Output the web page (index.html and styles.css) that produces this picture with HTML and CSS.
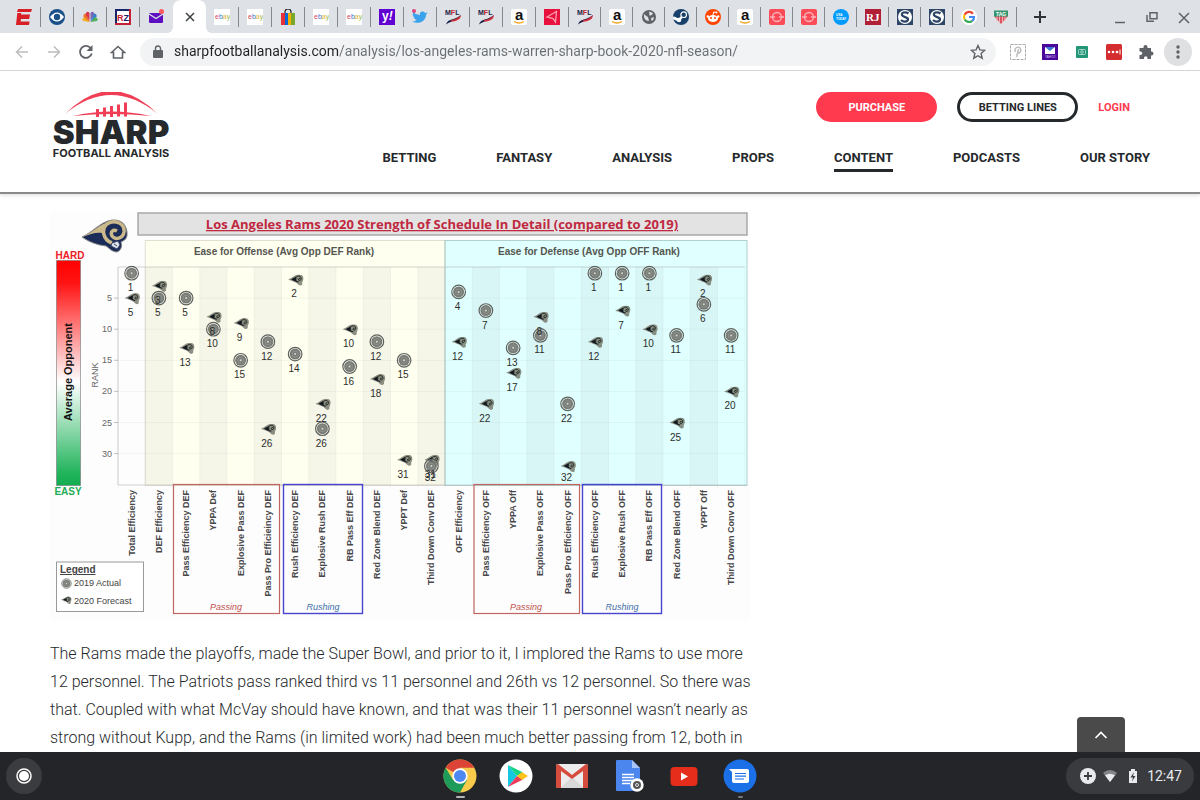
FILE: index.html
```html
<!DOCTYPE html>
<html lang="en">
<head>
  <meta charset="UTF-8" />
  <meta name="viewport" content="width=device-width, initial-scale=1.0"/>
  <title>Los Angeles Rams - Sharp Football Analysis</title>
  <link rel="stylesheet" href="styles.css">
</head>
<body>
  <!-- Shared icons -->
  <svg class="defs" width="0" height="0" aria-hidden="true">
    <symbol id="ebay" viewBox="0 0 16 16">
      <rect width="16" height="16" fill="#fff"/>
      <text x="1" y="10" font-size="7" class="fav-text"><tspan fill="#d9485a">e</tspan><tspan fill="#3b73c8">b</tspan><tspan fill="#e3b53a">a</tspan><tspan fill="#93b83e">y</tspan></text>
    </symbol>
    <symbol id="mfl" viewBox="0 0 16 16">
      <text x="0" y="6" font-size="7" font-weight="bold" class="fav-text"><tspan fill="#1c2145">M</tspan><tspan fill="#c3202f">F</tspan><tspan fill="#1c2145">L</tspan></text>
      <path d="M1 15.500C3 9 9 12 16 6C14 12 7 11 1 15.500z" fill="#1c2145"/>
      <path d="M6 11C9 11 13 9 16 6L15 9.500C12 12 9 12.500 6 12.500z" fill="#d3303c"/>
    </symbol>
    <symbol id="amazon" viewBox="0 0 16 16">
      <rect width="16" height="16" rx="2" fill="#fff"/>
      <text x="4" y="11" font-size="15" font-weight="bold" class="fav-text" fill="#111">a</text>
      <path d="M3 12.500Q8 15.500 13 12.500" fill="none" stroke="#f5a623" stroke-width="1.300"/>
    </symbol>
    <symbol id="redring" viewBox="0 0 16 16">
      <rect width="16" height="16" rx="2" fill="#fb4b57"/>
      <circle cx="8" cy="8" r="4.500" fill="none" stroke="#ffb3b8" stroke-width="1.300"/>
      <path d="M1 8h5M10 8h5" stroke="#ffb3b8" stroke-width="1.500"/>
      <rect x="6" y="6.500" width="4" height="3" fill="#fb4b57"/>
    </symbol>
    <symbol id="sharp-s" viewBox="0 0 16 16">
      <rect width="16" height="16" fill="#2d4566"/>
      <circle cx="8" cy="8" r="7" fill="#fff"/>
      <path d="M11.500 4.500C8 2 4 4 5 6.200S11.500 8 11 10.500S6.500 13.500 4 11" fill="none" stroke="#2d4566" stroke-width="2.200"/>
    </symbol>
    <symbol id="mail" viewBox="0 0 16 16">
      <rect x="1" y="4" width="14" height="10" rx="1" fill="#5e10c0"/>
      <path d="M1 5L8 9.500L15 5" fill="none" stroke="#dee1e6" stroke-width="1.300"/>
      <circle cx="13.500" cy="2.500" r="2.500" fill="#ff5a5f"/>
    </symbol>
    <symbol id="ram" viewBox="0 0 48 34">
      <path d="M1 18C12 13 19 3 31 1C42 0 47 8 46 17C45 21 42 22 40 23C42 28 39 32 36 33C31 33 28 29 25 27C16 26 8 23 1 18z" fill="#1b2c58" stroke="#8e8d8a" stroke-width="1"/>
      <path d="M1 18C11 14 18 5 30 2C24 6 22 11 23 15C18 12 10 15 1 18z" fill="#cbb98c"/>
      <path d="M31 24C22 21 20 10 26 5C33 0 44 4 43 13C42 20 34 21 31 17C29 13 32 10 36 12" fill="none" stroke="#cbb98c" stroke-width="3.500"/>
      <path d="M31 24l6-2 2 4-3 4-6-3z" fill="#dfe2ea" stroke="#33436a"/>
      <path d="M33 25l3 2" stroke="#33436a"/>
    </symbol>
    <symbol id="ram-dark" viewBox="0 0 16 12">
      <path d="M0 5C5 3 7 0 11 0C16 0 16 5 14 8C15 11 12 12 10 10C9 8 5 7 0 5z" fill="#6f7365" fill-opacity="0.800"/>
      <path d="M3 5C6 3 7 3 8 2C7 6 9 7 11 7L10 8C7 7 5 6 3 5z" fill="#121820"/>
      <path d="M8 5C7 2 10 1 12 2C14 4 13 6 11 6C10 5 10 4 12 4" fill="none" stroke="#1d251f" stroke-width="1"/>
    </symbol>
    <symbol id="coin" viewBox="0 0 16 16">
      <circle cx="8" cy="8" r="6.800" fill="#fff" fill-opacity="0.300" stroke="#5d625c" stroke-width="1.200"/>
      <circle cx="8" cy="8" r="5.500" fill="#6b6f69" fill-opacity="0.900"/>
      <circle cx="8" cy="8" r="3" fill="none" stroke="#a3a79f" stroke-width="0.500"/>
      <circle cx="8" cy="8" r="1" fill="#d5d7d0"/>
    </symbol>
  </svg>

  <div class="tabs">
    <div class="tab"><svg class="fav" viewBox="0 0 16 16"><path d="M2 0h14l-1 3H1zM1.300 4h4l-.300 1.500h9l-.800 4.500H5l-.400 2.500h9L13 16H0z" fill="#d81f26"/></svg></div>
    <div class="tab"><svg class="fav" viewBox="0 0 16 16"><circle cx="8" cy="8" r="8" fill="#1a5088"/><path d="M1 8Q8-1 15 8Q8 17 1 8z" fill="#fff"/><circle cx="8" cy="8" r="3.200" fill="#1a5088"/></svg></div>
    <div class="tab"><svg class="fav" viewBox="0 0 16 16"><path d="M7.500 13L1 12Q-1 9 3 8z" fill="#f3b128"/><path d="M7.500 13L1.500 8Q1 4 4.500 5z" fill="#ee7426"/><path d="M7.500 12L3.500 5Q5 1 7.500 4z" fill="#d8364a"/><path d="M8.500 12V4Q11 1 12.500 5z" fill="#7566b5"/><path d="M8.500 13L12 5Q15 4 14.500 8z" fill="#3380c8"/><path d="M8.500 13L13 8Q17 9 15 12z" fill="#51b058"/></svg></div>
    <div class="tab"><svg class="fav" viewBox="0 0 16 16"><rect x="1" y="1" width="14" height="14" fill="#fff" stroke="#18246a" stroke-width="2"/><path d="M0 15h16M15 0v16" stroke="#c42034" stroke-width="2"/><text x="2" y="12" font-size="9" font-weight="bold" class="fav-text"><tspan fill="#c42034">R</tspan><tspan fill="#18246a">Z</tspan></text></svg></div>
    <div class="tab"><svg class="fav"><use href="#mail"/></svg></div>
    <div class="tab active"><button class="close" aria-label="Close tab"><svg viewBox="0 0 16 16"><path d="M4 4l8 8M12 4l-8 8" stroke="#3c4043" stroke-width="1.500"/></svg></button></div>
    <div class="tab"><svg class="fav"><use href="#ebay"/></svg></div>
    <div class="tab"><svg class="fav"><use href="#ebay"/></svg></div>
    <div class="tab"><svg class="fav" viewBox="0 0 16 16"><path d="M5 5V3Q5 0 8 0T11 3V5" fill="none" stroke="#222" stroke-width="1.200"/><path d="M1 4h4v12H1z" fill="#e53238"/><path d="M5 4h3v12H5z" fill="#0968d8"/><path d="M8 4h3v12H8z" fill="#f5af02"/><path d="M11 4h4v12h-4z" fill="#79a82d"/></svg></div>
    <div class="tab"><svg class="fav"><use href="#ebay"/></svg></div>
    <div class="tab"><svg class="fav"><use href="#ebay"/></svg></div>
    <div class="tab"><svg class="fav" viewBox="0 0 16 16"><rect width="16" height="16" fill="#6001d2"/><text x="3" y="11" font-size="12" font-weight="bold" class="fav-text" fill="#fff">y<tspan font-style="italic">!</tspan></text></svg></div>
    <div class="tab"><svg class="fav" viewBox="0 0 16 16"><path d="M1 3Q4 6 8 6C7 3 11 1 13 4L15.500 3.500L14 6C14 12 7 16 0 12.500Q3 12.500 4.500 11Q2 10 2 8.500Q0 6 1 3z" fill="#3aa3ec"/><circle cx="2" cy="2" r="2" fill="#e0457b"/></svg></div>
    <div class="tab"><svg class="fav"><use href="#mfl"/></svg></div>
    <div class="tab"><svg class="fav"><use href="#mfl"/></svg></div>
    <div class="tab"><svg class="fav"><use href="#amazon"/></svg></div>
    <div class="tab"><svg class="fav" viewBox="0 0 16 16"><rect width="16" height="16" fill="#e8113d"/><path d="M3 8L12.500 2.500L11.500 13L9 9.500Z" fill="none" stroke="#ff9cad" stroke-width="1.300"/></svg></div>
    <div class="tab slim"><svg class="fav"><use href="#mfl"/></svg></div>
    <div class="tab slim"><svg class="fav"><use href="#amazon"/></svg></div>
    <div class="tab slim"><svg class="fav" viewBox="0 0 16 16"><circle cx="8" cy="8" r="7" fill="#5f6368"/><path d="M3 5Q5 7 7 8L8 12Q4 12 3 8zM8 2.500L12 4Q11 7 8.500 6.500zM10 9l3-1Q13 11 10.500 12z" fill="#dee1e6"/></svg></div>
    <div class="tab slim"><svg class="fav" viewBox="0 0 16 16"><circle cx="8" cy="8" r="8" fill="#17416b"/><path d="M0 8.500L5.500 11" stroke="#fff" stroke-width="3"/><circle cx="6" cy="11" r="2.300" fill="#fff"/><path d="M6 11L10.500 6" stroke="#fff" stroke-width="2.500"/><circle cx="10.700" cy="5.700" r="2.800" fill="#17416b" stroke="#fff" stroke-width="1.200"/></svg></div>
    <div class="tab slim"><svg class="fav" viewBox="0 0 16 16"><circle cx="8" cy="8" r="8" fill="#ff4500"/><ellipse cx="8" cy="9.500" rx="5" ry="3.500" fill="#fff"/><circle cx="2.800" cy="7.500" r="1.200" fill="#fff"/><circle cx="13.200" cy="7.500" r="1.200" fill="#fff"/><path d="M8 6l.700-3 2.500.500" fill="none" stroke="#fff"/><circle cx="11.500" cy="3.500" r="1" fill="#fff"/><circle cx="6" cy="9" r="1" fill="#ff4500"/><circle cx="10" cy="9" r="1" fill="#ff4500"/></svg></div>
    <div class="tab slim"><svg class="fav"><use href="#amazon"/></svg></div>
    <div class="tab slim"><svg class="fav"><use href="#redring"/></svg></div>
    <div class="tab slim"><svg class="fav"><use href="#redring"/></svg></div>
    <div class="tab slim"><svg class="fav" viewBox="0 0 16 16"><circle cx="8" cy="8" r="8" fill="#009bff"/><g font-size="3" font-weight="bold" class="fav-text" fill="#fff"><text x="3" y="7">USA</text><text x="3" y="11">TODAY</text></g></svg></div>
    <div class="tab slim"><svg class="fav" viewBox="0 0 16 16"><rect width="16" height="16" fill="#b01f36"/><text x="1" y="12" font-size="11" font-weight="bold" class="fav-serif" fill="#fff">RJ</text></svg></div>
    <div class="tab slim"><svg class="fav"><use href="#sharp-s"/></svg></div>
    <div class="tab slim"><svg class="fav"><use href="#sharp-s"/></svg></div>
    <div class="tab slim"><svg class="fav" viewBox="0 0 16 16"><circle cx="8" cy="8" r="8" fill="#fff"/><g fill="none" stroke-width="2.200"><path d="M12 4.700A5 5 0 0 0 3.600 5.700" stroke="#ea4335"/><path d="M3.600 5.700A5 5 0 0 0 3.700 10.500" stroke="#fbbc05"/><path d="M3.700 10.500A5 5 0 0 0 11.300 11.800" stroke="#34a853"/><path d="M11.300 11.800A5 5 0 0 0 13 8H8" stroke="#4285f4"/></g></svg></div>
    <div class="tab slim"><svg class="fav" viewBox="0 0 16 16"><path d="M1 2h14v5L8 15L1 7z" fill="#d8545e"/><path d="M4 7v5M6.500 7v7M9.500 7v7M12 7v5" stroke="#f1b4b6"/><rect x="1" y="1.500" width="14" height="6" fill="#33946d"/><text x="3" y="6.500" font-size="5" font-weight="bold" class="fav-text" fill="#fff">TAG</text></svg></div>
    <button class="new-tab" aria-label="New tab"><svg viewBox="0 0 16 16"><path d="M8 2v12M2 8h12" stroke="#303336" stroke-width="2"/></svg></button>
    <div class="window-buttons">
      <button aria-label="Minimize"><svg viewBox="0 0 16 16"><path d="M3 13.500h10" stroke="#5f6368" stroke-width="1.500"/></svg></button>
      <button aria-label="Restore"><svg viewBox="0 0 16 16"><path d="M6 3.700h7v6H6zM3 6v6.300h7" fill="none" stroke="#5f6368" stroke-width="1.500"/></svg></button>
      <button aria-label="Close window"><svg viewBox="0 0 16 16"><path d="M3 4l10 10M13 4L3 14" stroke="#5f6368" stroke-width="1.500"/></svg></button>
    </div>
  </div>

  <div class="toolbar">
    <button aria-label="Back"><svg viewBox="0 0 16 16"><path d="M14 8H3M8 2.500L2.500 8L8 13.500" fill="none" stroke="#babcbe" stroke-width="1.500"/></svg></button>
    <button aria-label="Forward"><svg viewBox="0 0 16 16"><path d="M2 8h11M8 2.500L13.500 8L8 13.500" fill="none" stroke="#babcbe" stroke-width="1.500"/></svg></button>
    <button aria-label="Reload"><svg viewBox="0 0 16 16"><path d="M13 4.500A6 6 0 1 0 13.800 9.500" fill="none" stroke="#5f6368" stroke-width="1.800"/><path d="M14.500 1v6h-6z" fill="#5f6368"/></svg></button>
    <button aria-label="Home"><svg viewBox="0 0 16 16"><path d="M1.500 8.500L8 2.500L14.500 8.500H12.500V14H3.500V8.500z" fill="none" stroke="#5f6368" stroke-width="1.600"/></svg></button>
    <div class="address">
      <svg viewBox="0 0 16 16"><path d="M4 6h8a1 1 0 0 1 1 1v6a1 1 0 0 1-1 1H4a1 1 0 0 1-1-1V7a1 1 0 0 1 1-1z" fill="#5f6368"/><path d="M5.500 6V4.500a2.500 2.500 0 0 1 5 0V6" fill="none" stroke="#5f6368" stroke-width="1.400"/></svg>
      <input type="text" class="url" aria-label="Address" value="sharpfootballanalysis.com/analysis/los-angeles-rams-warren-sharp-book-2020-nfl-season/">
      <button aria-label="Bookmark"><svg viewBox="0 0 16 16"><path d="M8 1.500l1.900 4.400 4.800.400-3.600 3.200 1.100 4.700L8 11.700l-4.200 2.500 1.100-4.700L1.300 6.300l4.800-.400z" fill="none" stroke="#5f6368" stroke-width="1.400"/></svg></button>
    </div>
    <button aria-label="Pinterest"><svg viewBox="0 0 16 16"><rect x="0.500" y="0.500" width="15" height="15" fill="none" stroke="#aaa" stroke-dasharray="3 1"/><path d="M6.500 13L8.500 5M5.500 8C3.500 4 8 2 10 4S10 10 7.500 9" fill="none" stroke="#bbb" stroke-width="1.400"/></svg></button>
    <button aria-label="Yahoo Mail"><svg viewBox="0 0 16 16"><rect width="16" height="16" fill="#4b079c"/><rect x="3" y="3" width="10" height="7" fill="#fff"/><path d="M3 3h10L8 7z" fill="#3a77d4"/><text x="3" y="14" font-size="3" fill="#d8c8f0" class="fav-text">YAHOO</text></svg></button>
    <button aria-label="Camera"><svg viewBox="0 0 16 16"><rect x="2" y="2" width="12" height="12" rx="1" fill="#239678"/><rect x="4.500" y="5.500" width="7" height="5" rx="1" fill="none" stroke="#c2e5db" stroke-width="0.800"/><circle cx="8" cy="8" r="1.300" fill="none" stroke="#c2e5db" stroke-width="0.800"/></svg></button>
    <button aria-label="LastPass"><svg viewBox="0 0 16 16"><rect width="16" height="16" rx="1.500" fill="#d32d2f"/><circle cx="3" cy="8" r="1.300" fill="#fff"/><circle cx="7" cy="8" r="1.300" fill="#fff"/><circle cx="11" cy="8" r="1.300" fill="#fff"/><path d="M14 5.500v5" stroke="#fff"/></svg></button>
    <button aria-label="Extensions"><svg viewBox="0 0 16 16"><path d="M2 4h3.500V3a2 2 0 0 1 4 0v1H13v3.500h.500a2 2 0 0 1 0 4H13V15H9.500v-1a1.700 1.700 0 0 0-3.500 0v1H1.500v-4h1a1.700 1.700 0 0 0 0-3.500h-1V4z" fill="#5f6368"/></svg></button>
    <button class="menu" aria-label="Menu"><svg viewBox="0 0 16 16"><circle cx="8" cy="3" r="1.700" fill="#5f6368"/><circle cx="8" cy="8" r="1.700" fill="#5f6368"/><circle cx="8" cy="13" r="1.700" fill="#5f6368"/></svg></button>
  </div>

  <div class="page">
    <header class="site-header">
      <a href="#" class="logo" aria-label="Sharp Football Analysis">
        <svg viewBox="0 0 122 67">
          <path d="M15 22Q61-24 108 22Q61-16 15 22z" fill="#ef3e55"/>
          <path d="M23 24Q61 15 101 24Q61 20 23 24z" fill="#ef3e55"/>
          <path d="M47.500 17v8M54.500 15.500v9M61.500 14v11M68.500 12.500v12M75.500 10.500v14" stroke="#ef3e55" stroke-width="3"/>
          <text x="61" y="52" text-anchor="middle" class="logo-big">SHARP</text>
          <text x="61" y="65" text-anchor="middle" class="logo-small">FOOTBALL ANALYSIS</text>
        </svg>
      </a>
      <div class="header-right">
        <div class="account">
          <button class="pill red">PURCHASE</button>
          <button class="pill">BETTING LINES</button>
          <a href="#" class="login">LOGIN</a>
        </div>
        <nav class="main-nav">
          <a href="#">BETTING</a>
          <a href="#">FANTASY</a>
          <a href="#">ANALYSIS</a>
          <a href="#">PROPS</a>
          <a href="#" class="current">CONTENT</a>
          <a href="#">PODCASTS</a>
          <a href="#">OUR STORY</a>
        </nav>
      </div>
    </header>

    <main class="content">
      <article>
        <svg class="chart" viewBox="0 0 700 415" role="img" aria-label="Los Angeles Rams 2020 strength of schedule">
          <defs>
            <linearGradient id="scale" x1="0" y1="0" x2="0" y2="1">
              <stop offset="0" stop-color="#ff0000"/>
              <stop offset="0.100" stop-color="#ff1414"/>
              <stop offset="0.540" stop-color="#ffffff"/>
              <stop offset="0.950" stop-color="#1fb35a"/>
              <stop offset="1" stop-color="#12ad50"/>
            </linearGradient>
          </defs>
          <rect y="7" width="700" height="408" fill="#fdfdfd"/>
          <rect x="88" y="8" width="609" height="22" fill="#e3e3e3" stroke="#a9a9a9" stroke-width="1.500"/>
          <text x="392" y="24" text-anchor="middle" class="chart-title">Los Angeles Rams 2020 Strength of Schedule In Detail (compared to 2019)</text>
          <use href="#ram" x="31" y="14" width="48" height="34"/>
          <text x="20" y="54" text-anchor="middle" class="hard">HARD</text>
          <rect x="6.500" y="55.500" width="24" height="225" fill="url(#scale)" stroke="#777" stroke-opacity="0.600"/>
          <text transform="translate(22 167) rotate(-90)" text-anchor="middle" class="opponent">Average Opponent</text>
          <text x="18" y="290" text-anchor="middle" class="easy">EASY</text>
          <text transform="translate(48 170) rotate(-90)" text-anchor="middle" class="axis">RANK</text>
          <g id="plot"></g>
          <text x="234" y="50" text-anchor="middle" class="group-title">Ease for Offense (Avg Opp DEF Rank)</text>
          <text x="539" y="50" text-anchor="middle" class="group-title">Ease for Defense (Avg Opp OFF Rank)</text>
          <g fill="none" stroke="#c0655f" stroke-width="1.200">
            <rect x="123.500" y="279.500" width="106" height="129"/>
            <rect x="424" y="279.500" width="105.500" height="129"/>
          </g>
          <g fill="none" stroke="#4744cf" stroke-width="1.400">
            <rect x="233.500" y="279.500" width="79" height="129"/>
            <rect x="532.500" y="279.500" width="79" height="129"/>
          </g>
          <text x="176" y="405" text-anchor="middle" class="passing">Passing</text>
          <text x="273" y="405" text-anchor="middle" class="rushing">Rushing</text>
          <text x="476" y="405" text-anchor="middle" class="passing">Passing</text>
          <text x="572" y="405" text-anchor="middle" class="rushing">Rushing</text>
          <rect x="6.500" y="357" width="87" height="49.500" fill="#fff" stroke="#999"/>
          <text x="10" y="368" class="legend-title">Legend</text>
          <use href="#coin" x="11" y="373" width="11" height="11"/>
          <text x="24" y="381" class="legend">2019 Actual</text>
          <use href="#ram-dark" x="11" y="391" width="11" height="9"/>
          <text x="24" y="399" class="legend">2020 Forecast</text>
        </svg>
        <p>The Rams made the playoffs, made the Super Bowl, and prior to it, I implored the Rams to use more 12 personnel. The Patriots pass ranked third vs 11 personnel and 26th vs 12 personnel. So there was that. Coupled with what McVay should have known, and that was their 11 personnel wasn’t nearly as strong without Kupp, and the Rams (in limited work) had been much better passing from 12, both in</p>
      </article>
    </main>
    <button class="to-top" aria-label="Back to top"><svg viewBox="0 0 16 16"><path d="M2.500 11L8 5.500L13.500 11" fill="none" stroke="#fff" stroke-width="1.700"/></svg></button>
  </div>

  <footer class="shelf">
    <button class="launcher" aria-label="Launcher"><svg viewBox="0 0 16 16"><circle cx="8" cy="8" r="7" fill="none" stroke="#fff" stroke-width="1.500"/><circle cx="8" cy="8" r="5" fill="#fff"/></svg></button>
    <div class="apps">
      <button class="open" aria-label="Chrome"><svg viewBox="0 0 34 34"><circle cx="17" cy="17" r="16.500" fill="#f9cb4b"/><path d="M17 17L2.700 8.700A16.500 16.500 0 0 1 31.300 8.700H17z" fill="#db4437"/><path d="M2.700 8.700A16.500 16.500 0 0 0 17 33.500L24 21L10 21z" fill="#1e9b5a"/><circle cx="17" cy="17" r="7.700" fill="#fff"/><circle cx="17" cy="17" r="6" fill="#4d87f1"/></svg></button>
      <button aria-label="Play Store"><svg viewBox="0 0 34 34"><circle cx="17" cy="17" r="16.500" fill="#fff"/><path d="M9 6L18 17L9 28z" fill="#14c8e0"/><path d="M9 6L24 13.500L18 17z" fill="#12d483"/><path d="M9 28L24 20.500L18 17z" fill="#ed3a5a"/><path d="M23 13L29 17L23 21L18 17z" fill="#fcc21c"/></svg></button>
      <button aria-label="Gmail"><svg viewBox="0 0 34 34"><rect x="1" y="5" width="32" height="24" rx="2" fill="#ececec"/><path d="M5 29L17 18L29 29z" fill="#d9d9d9"/><path d="M1 7Q1 5 3 5L17 16L31 5Q33 5 33 7V29H28V12L17 20L6 12V29H3Q1 29 1 27z" fill="#d54b3d"/></svg></button>
      <button aria-label="Docs"><svg viewBox="0 0 34 34"><path d="M6 1H21L29 9V32H6Q5 32 5 31V2Q5 1 6 1z" fill="#4a86ee"/><path d="M21 1L29 9H21z" fill="#a9c5f8"/><path d="M11 15.500h12M11 18.500h12M11 21.500h12M11 24.500h8" stroke="#fff" stroke-width="1.300"/><circle cx="26" cy="26" r="6.700" fill="#fff"/><circle cx="26" cy="26" r="4" fill="#555"/><circle cx="26" cy="26" r="1.500" fill="#555" stroke="#ddd"/></svg></button>
      <button aria-label="YouTube"><svg viewBox="0 0 34 34"><rect x="3.500" y="8" width="27" height="19" rx="4" fill="#e62d1c"/><path d="M14 13.500L21 17.500L14 21.500z" fill="#fff"/></svg></button>
      <button class="open dim" aria-label="Messages"><svg viewBox="0 0 34 34"><circle cx="17" cy="17" r="16.500" fill="#1b70e8"/><path d="M6 10H24Q26 10 26 12V22Q26 24 24 24H11Q9 24 9 22V13z" fill="#fff"/><path d="M12 14.500h11M12 17.200h11M12 20h9" stroke="#1b70e8" stroke-width="1.200"/></svg></button>
    </div>
    <button class="status">
      <svg viewBox="0 0 16 16"><circle cx="8" cy="8" r="8" fill="#e8eaed"/><path d="M8 4v8M4 8h8" stroke="#3a3b3f" stroke-width="1.800"/></svg>
      <svg viewBox="0 0 16 16"><path d="M1 5Q8-1 15 5L8 14z" fill="#838589"/><path d="M3 7.300Q8 4 13 7.300L8 14z" fill="#e8eaed"/></svg>
      <svg viewBox="0 0 16 16"><path d="M6 1h4v2h2v12H4V3h2z" fill="#e8eaed"/><path d="M9 4L5.500 9.500H8L7 13.500L10.500 8H8z" fill="#3a3b3f"/></svg>
      <span>12:47</span>
    </button>
  </footer>

  <script src="chart.js"></script>
</body>
</html>
```

FILE: styles.css
```css
* {
  box-sizing: border-box;
}

body {
  margin: 0;
  height: 100vh;
  display: flex;
  flex-direction: column;
  overflow: hidden;
  font-family: Roboto, "Liberation Sans", sans-serif;
  color: #26292c;
  background-color: #fff;
}

button {
  font-family: inherit;
  border: none;
  padding: 0;
  background: none;
  cursor: pointer;
}

a {
  color: inherit;
  text-decoration: none;
}

svg {
  display: block;
  flex-shrink: 0;
}

.defs {
  display: none;
}

.fav-text {
  font-family: "Liberation Sans", sans-serif;
}

.fav-serif {
  font-family: "Liberation Serif", serif;
}

/* Tab strip */
.tabs {
  display: flex;
  align-items: center;
  height: 33px;
  padding-left: 8px;
  background-color: #dee1e6;
}

.tab {
  display: flex;
  align-items: center;
  justify-content: center;
  width: 33px;
  height: 20px;
  border-right: 1px solid #85888d;
}

.tab.slim {
  width: 32px;
}

.fav {
  width: 16px;
  height: 16px;
}

.tab.active {
  position: relative;
  height: 33px;
  border: none;
  border-radius: 8px 8px 0 0;
  background-color: #fff;
}

.tab:has(+ .active) {
  border-right-color: transparent;
}

.tab.active::before,
.tab.active::after {
  content: "";
  position: absolute;
  bottom: 0;
  width: 6px;
  height: 6px;
}

.tab.active::before {
  right: 100%;
  background: radial-gradient(circle at 0 0, transparent 6px, #fff 6px);
}

.tab.active::after {
  left: 100%;
  background: radial-gradient(circle at 100% 0, transparent 6px, #fff 6px);
}

.close svg,
.new-tab svg,
.window-buttons svg {
  width: 16px;
  height: 16px;
}

.new-tab {
  padding: 8px 15px;
}

.window-buttons {
  display: flex;
  margin-left: auto;
}

.window-buttons button {
  padding: 8px;
}

/* Toolbar */
.toolbar {
  display: flex;
  align-items: center;
  height: 38px;
  padding: 0 6px;
  border-bottom: 1px solid #d5d6d8;
}

.toolbar button {
  display: flex;
  align-items: center;
  justify-content: center;
  width: 32px;
  height: 28px;
}

.toolbar svg {
  width: 16px;
  height: 16px;
}

.address {
  display: flex;
  align-items: center;
  flex: 1;
  height: 28px;
  margin: 0 6px;
  padding: 0 2px 0 10px;
  border-radius: 14px;
  background-color: #f1f3f4;
}

.url {
  flex: 1;
  min-width: 0;
  height: 28px;
  margin-left: 8px;
  padding: 0 0 2px;
  border: none;
  outline: none;
  font-family: Roboto, "Liberation Sans", sans-serif;
  font-size: 14px;
  color: #202124;
  /* host in dark, path in grey */
  background: linear-gradient(to right, #202124 165px, #6b6f73 165px);
  -webkit-background-clip: text;
  background-clip: text;
  -webkit-text-fill-color: transparent;
}

.toolbar .menu {
  width: 28px;
  margin: 0 2px;
  border-radius: 50%;
  background-color: #dfe0e2;
}

/* Page */
.page {
  position: relative;
  flex: 1;
  min-height: 0;
  overflow: hidden;
}

.site-header {
  display: flex;
  justify-content: space-between;
  align-items: flex-start;
  padding: 21px 50px 20px;
  border-bottom: 2px solid #8a8a8a;
  box-shadow: 0 1px 4px rgba(0, 0, 0, 0.15);
}

.logo svg {
  width: 122px;
  height: 67px;
}

.logo-big {
  font-family: Inter, "Liberation Sans", sans-serif;
  font-size: 33px;
  font-weight: 900;
  fill: #26292c;
}

.logo-small {
  font-family: Inter, "Liberation Sans", sans-serif;
  font-size: 11px;
  font-weight: 700;
  fill: #26292c;
}

.account {
  display: flex;
  justify-content: flex-end;
  align-items: center;
  gap: 20px;
  padding-right: 20px;
  margin-bottom: 26px;
}

.pill {
  width: 121px;
  height: 30px;
  border: 3px solid #26292c;
  border-radius: 15px;
  font-size: 11px;
  font-weight: 700;
  color: #26292c;
}

.pill.red {
  border-color: #ff3a4f;
  background-color: #ff3a4f;
  color: #fff;
}

.login {
  font-size: 11px;
  font-weight: 700;
  color: #ff3a4f;
}

.main-nav {
  display: flex;
  justify-content: flex-end;
  gap: 60px;
}

.main-nav a {
  padding-bottom: 1px;
  border-bottom: 3px solid transparent;
  font-size: 13px;
  line-height: 20px;
  font-weight: 700;
}

.main-nav .current {
  border-color: #26292c;
}

.content {
  padding: 11px 50px 0;
}

article {
  max-width: 710px;
}

article p {
  margin: 20px 0;
  font-size: 16px;
  font-weight: 300;
  line-height: 28px;
}

.to-top {
  position: absolute;
  right: 75px;
  bottom: 0;
  display: flex;
  align-items: center;
  justify-content: center;
  width: 48px;
  height: 35px;
  border-radius: 4px 4px 0 0;
  background-color: #4a4a4a;
}

.to-top svg {
  width: 16px;
  height: 16px;
}

/* Chart */
.chart {
  width: 100%;
  max-width: 700px;
  height: auto;
  font-family: "Liberation Sans", Arial, sans-serif;
}

.chart-title {
  font-family: "Open Sans", sans-serif;
  font-size: 13px;
  font-weight: 700;
  fill: #c02840;
  text-decoration: underline;
}

.group-title {
  font-size: 10px;
  font-weight: 700;
  fill: #55564f;
}

.hard,
.easy,
.opponent {
  font-size: 10px;
  font-weight: 700;
}

.hard {
  fill: #ee2026;
}

.easy {
  fill: #1eae58;
}

.opponent {
  font-size: 11px;
  fill: #111;
}

.axis {
  font-size: 9px;
  fill: #666;
}

.value {
  font-size: 10px;
  fill: #2c2e2c;
}

.category {
  font-size: 9px;
  font-weight: 700;
  fill: #48484a;
}

.passing,
.rushing {
  font-size: 9px;
  font-style: italic;
}

.passing {
  fill: #c0504d;
}

.rushing {
  fill: #3f6fa8;
}

.legend-title {
  font-size: 10px;
  font-weight: 700;
  fill: #444;
  text-decoration: underline;
}

.legend {
  font-size: 9px;
  fill: #444;
}

/* Shelf */
.shelf {
  display: grid;
  grid-template-columns: 1fr auto 1fr;
  align-items: center;
  height: 48px;
  padding: 0 6px;
  background-color: #242529;
}

.launcher {
  display: flex;
  align-items: center;
  justify-content: center;
  width: 36px;
  height: 36px;
  border-radius: 50%;
  background-color: #3b3c40;
}

.launcher svg {
  width: 16px;
  height: 16px;
}

.apps {
  display: flex;
}

.apps button {
  position: relative;
  display: flex;
  align-items: center;
  justify-content: center;
  width: 56px;
  height: 48px;
}

.apps svg {
  width: 34px;
  height: 34px;
}

.apps .open::after {
  content: "";
  position: absolute;
  bottom: 2px;
  width: 9px;
  height: 2px;
  border-radius: 1px;
  background-color: #b4b5b7;
}

.apps .dim::after {
  width: 5px;
  background-color: #77787b;
}

.status {
  display: flex;
  align-items: center;
  justify-content: space-between;
  justify-self: end;
  width: 128px;
  height: 36px;
  padding: 0 12px 0 14px;
  border-radius: 18px;
  background-color: #3a3b3f;
  font-size: 14px;
  color: #e8eaed;
}

.status svg {
  width: 16px;
  height: 16px;
}
```

FILE: chart.js
```js
// label, 2019 actual rank, 2020 forecast rank
const columns = [
  ["Total Efficiency", 1, 5],
  ["DEF Efficiency", 5, 3],
  ["Pass Efficiency DEF", 5, 13],
  ["YPPA Def", 10, 8],
  ["Explosive Pass DEF", 15, 9],
  ["Pass Pro Efficieincy DEF", 12, 26],
  ["Rush Efficiency DEF", 14, 2],
  ["Explosive Rush DEF", 26, 22],
  ["RB Pass Eff DEF", 16, 10],
  ["Red Zone Blend DEF", 12, 18],
  ["YPPT Def", 15, 31],
  ["Third Down Conv DEF", 32, 31],
  ["OFF Efficiency", 4, 12],
  ["Pass Efficiency OFF", 7, 22],
  ["YPPA Off", 13, 17],
  ["Explosive Pass OFF", 11, 8],
  ["Pass Pro Efficiency OFF", 22, 32],
  ["Rush Efficiency OFF", 1, 12],
  ["Explosive Rush OFF", 1, 7],
  ["RB Pass Eff OFF", 1, 10],
  ["Red Zone Blend OFF", 11, 25],
  ["YPPT Off", 6, 2],
  ["Third Down Conv OFF", 11, 20]
];

const left = 68;
const top0 = 62;
const bottom = 280;
const colWidth = 27.25;
const x = i => left + colWidth * i;
const y = rank => top0 + 6.22 * rank;

let out = "";

// backgrounds
out += `<rect x="${x(1)}" y="35" width="${x(12) - x(1)}" height="245" fill="#fffff0"/>`;
out += `<rect x="${x(12)}" y="35" width="302" height="245" fill="#e0ffff"/>`;
for (let i = 1; i < columns.length; i += 2) {
  out += `<rect x="${x(i)}" y="${top0}" width="${colWidth}" height="218" fill="${i < 12 ? "#f5f5e8" : "#d9f6f6"}"/>`;
}

// grid
for (let r = 5; r <= 30; r += 5) {
  out += `<path d="M${left} ${y(r)}H${x(23)}" stroke="#999" stroke-opacity="0.1"/>`;
  out += `<path d="M${left - 4} ${y(r)}H${left}" stroke="#999" stroke-opacity="0.6"/>`;
  out += `<text x="62" y="${y(r) + 3}" text-anchor="end" class="axis">${r}</text>`;
}
for (let i = 0; i <= 23; i++) {
  out += `<path d="M${x(i)} ${top0}V${bottom + 4}" stroke="#999" stroke-opacity="0.1"/>`;
}
out += `<path d="M${left} ${bottom}V${top0}H${x(23)}M${left} ${bottom}H697" fill="none" stroke="#aaa" stroke-opacity="0.5"/>`;
out += `<rect x="${x(1)}" y="35.5" width="${x(12) - x(1)}" height="245" fill="none" stroke="#c8c8bc" stroke-opacity="0.6"/>`;
out += `<rect x="${x(12)}" y="35.5" width="302" height="245" fill="none" stroke="#9bbcbc" stroke-opacity="0.7"/>`;

// markers first, so the numbers stay on top
columns.forEach(([label, actual, forecast], i) => {
  const cx = x(i + 0.5);
  out += `<use href="#ram-dark" x="${cx - 7}" y="${y(forecast) - 5}" width="16" height="12"/>`;
  out += `<use href="#coin" x="${cx - 8}" y="${y(actual) - 8}" width="16" height="16"/>`;
});
columns.forEach(([label, actual, forecast], i) => {
  const cx = x(i + 0.5);
  [actual, forecast].forEach(rank => {
    out += `<text x="${cx - 1}" y="${Math.min(y(rank) + 18, 276)}" text-anchor="middle" class="value">${rank}</text>`;
  });
  out += `<text transform="translate(${cx + 3} 285) rotate(-90)" text-anchor="end" class="category">${label}</text>`;
});

document.getElementById("plot").innerHTML = out;
```
